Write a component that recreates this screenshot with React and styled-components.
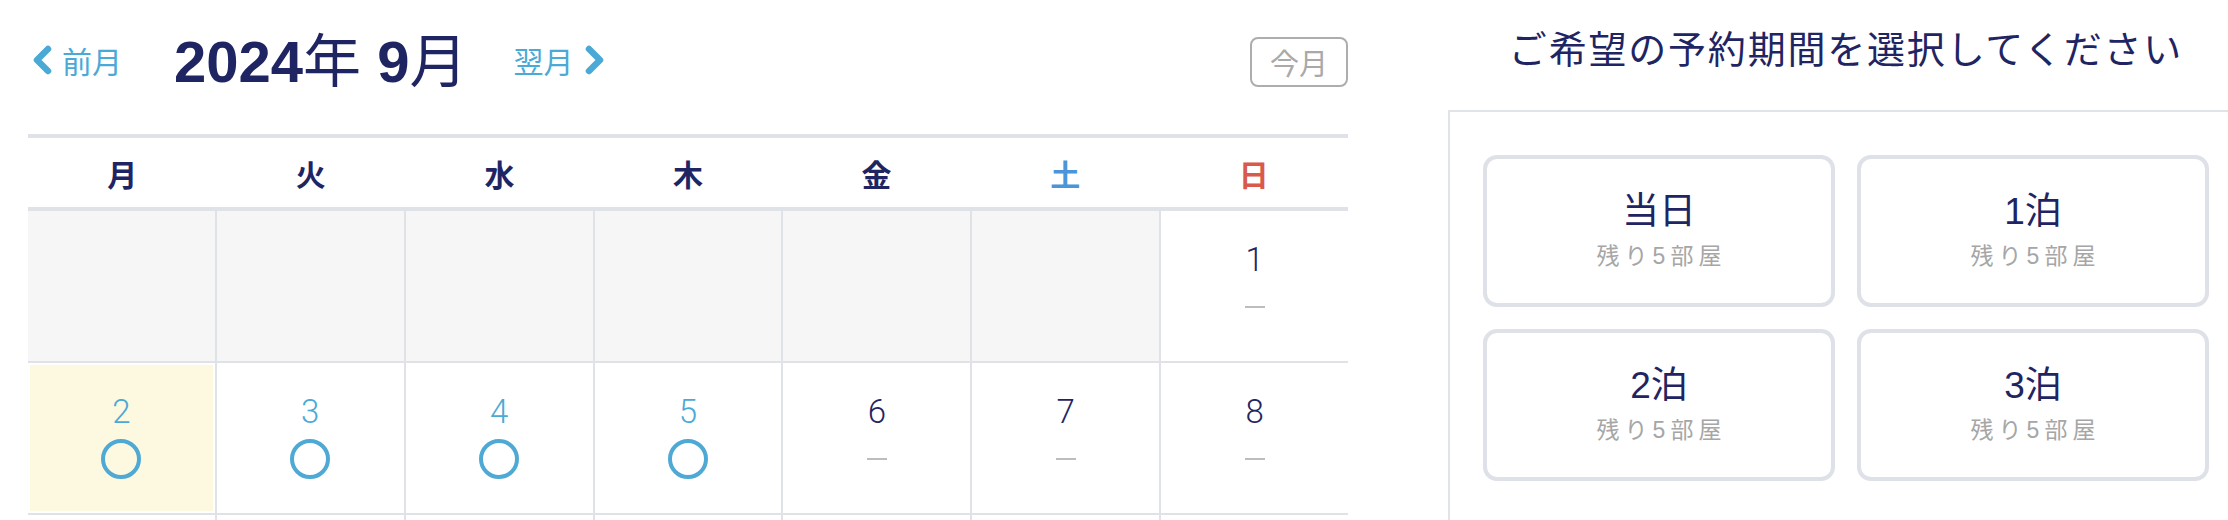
import React from "react";
import styled, { createGlobalStyle } from "styled-components";

const NAVY = "#1f2563";
const BLUE = "#4ba9d6";
const LINE = "#dfe2e7";

const GlobalStyle = createGlobalStyle`
  html, body {
    margin: 0;
    padding: 0;
    background: #fff;
    overflow: hidden;
  }
  body {
    font-family: "Liberation Sans", "Noto Sans CJK JP", sans-serif;
    color: ${NAVY};
  }
`;

const WEEKDAYS = [
  { label: "月", color: NAVY },
  { label: "火", color: NAVY },
  { label: "水", color: NAVY },
  { label: "木", color: NAVY },
  { label: "金", color: NAVY },
  { label: "土", color: "#4a96d9" },
  { label: "日", color: "#d9594b" },
];

const PLANS = ["当日", "1泊", "2泊", "3泊"];

// September 2024, weeks start on Monday (the 1st is a Sunday)
const buildDays = () => {
  const cells = [];
  for (let i = 0; i < 6; i++) cells.push({ blank: true });
  for (let d = 1; d <= 30; d++) {
    cells.push({
      day: d,
      open: d >= 2 && d <= 5,
      today: d === 2,
    });
  }
  while (cells.length % 7) cells.push({ blank: true });
  return cells;
};

const Chevron = ({ dir }) => (
  <svg width="21" height="30" viewBox="0 0 21 30">
    <polyline
      points={dir === "left" ? "16,4 5,15 16,26" : "5,4 16,15 5,26"}
      fill="none"
      stroke={BLUE}
      strokeWidth="6.5"
      strokeLinecap="round"
      strokeLinejoin="round"
    />
  </svg>
);

const App = () => {
  const days = buildDays();
  return (
    <>
      <GlobalStyle />
      <Page>
        <Calendar>
          <Header>
            <NavLink>
              <Chevron dir="left" />
              前月
            </NavLink>
            <MonthTitle>
              <Num>2024</Num>年 <Num>9</Num>月
            </MonthTitle>
            <NavLink $gap={11}>
              翌月
              <Chevron dir="right" />
            </NavLink>
            <TodayButton type="button">今月</TodayButton>
          </Header>

          <WeekHead>
            {WEEKDAYS.map((w) => (
              <WeekDay key={w.label} $color={w.color}>
                {w.label}
              </WeekDay>
            ))}
          </WeekHead>

          <DaysGrid>
            {days.map((c, i) =>
              c.blank ? (
                <DayCell key={i} $variant="blank" />
              ) : (
                <DayCell key={i} $variant={c.today ? "today" : "normal"}>
                  <DayNum $open={c.open}>{c.day}</DayNum>
                  <Mark>{c.open ? <Circle /> : <Dash />}</Mark>
                </DayCell>
              )
            )}
          </DaysGrid>
        </Calendar>

        <Side>
          <SideTitle>ご希望の予約期間を選択してください</SideTitle>
          <Panel>
            {PLANS.map((p) => (
              <PlanCard key={p} type="button">
                <PlanLabel>{p}</PlanLabel>
                <PlanSub>残り5部屋</PlanSub>
              </PlanCard>
            ))}
          </Panel>
        </Side>
      </Page>
    </>
  );
};

const Page = styled.div`
  display: flex;
  align-items: flex-start;
  width: 2228px;
  padding-left: 28px;
  box-sizing: border-box;
`;

const Calendar = styled.section`
  width: 1320px;
  flex: none;
`;

const Header = styled.div`
  display: flex;
  align-items: center;
  height: 120px;
  padding-left: 4px;
  margin-bottom: 14px;
`;

const NavLink = styled.a`
  display: flex;
  align-items: center;
  gap: ${(p) => p.$gap || 9}px;
  color: ${BLUE};
  font-family: "Noto Sans CJK JP", sans-serif;
  font-size: 30px;
  line-height: 1;
  cursor: pointer;
`;

const MonthTitle = styled.h1`
  margin: 4px 46px 0 52px;
  font-size: 58px;
  font-weight: 400;
  line-height: 1;
  color: ${NAVY};
  white-space: pre;
`;

const Num = styled.span`
  font-family: "Liberation Sans", sans-serif;
  font-weight: 700;
`;

const TodayButton = styled.button`
  margin-left: auto;
  height: 50px;
  padding: 0 18px;
  margin-top: 4px;
  border: 2px solid #adadad;
  border-radius: 8px;
  background: #fff;
  color: #a9a9a9;
  font-family: "Noto Sans CJK JP", sans-serif;
  font-size: 29px;
  line-height: 1;
`;

const WeekHead = styled.div`
  display: grid;
  grid-template-columns: repeat(7, 1fr);
  height: 69px;
  border-top: 4px solid ${LINE};
  border-bottom: 4px solid ${LINE};
`;

const WeekDay = styled.div`
  display: flex;
  align-items: center;
  justify-content: center;
  font-family: "Noto Sans CJK JP", sans-serif;
  font-size: 30px;
  font-weight: 700;
  color: ${(p) => p.$color};
`;

const DaysGrid = styled.div`
  display: grid;
  grid-template-columns: repeat(7, 1fr);
  grid-auto-rows: 150px;
  gap: 2px;
  background: ${LINE};
`;

const DayCell = styled.div`
  display: flex;
  flex-direction: column;
  align-items: center;
  padding-top: 27px;
  box-sizing: border-box;
  background: ${(p) =>
    p.$variant === "blank" ? "#f6f6f7" : p.$variant === "today" ? "#fdf8e0" : "#fff"};
  box-shadow: ${(p) => (p.$variant === "today" ? "inset 0 0 0 2px #fff" : "none")};
`;

const DayNum = styled.div`
  font-family: Roboto, "Liberation Sans", sans-serif;
  font-weight: 300;
  font-size: 33px;
  line-height: 44px;
  color: ${(p) => (p.$open ? BLUE : NAVY)};
`;

const Mark = styled.div`
  height: 40px;
  margin-top: 5px;
  display: flex;
  align-items: center;
  justify-content: center;
`;

const Circle = styled.span`
  width: 40px;
  height: 40px;
  box-sizing: border-box;
  border: 4px solid #4fa9d5;
  border-radius: 50%;
`;

const Dash = styled.span`
  width: 20px;
  height: 2px;
  background: #bdbdbd;
`;

const Side = styled.aside`
  width: 796px;
  flex: none;
  margin-left: 100px;
`;

const SideTitle = styled.h2`
  margin: 0;
  height: 110px;
  line-height: 94px;
  text-align: center;
  font-family: "Noto Sans CJK JP", sans-serif;
  font-size: 38px;
  font-weight: 400;
  letter-spacing: 1.8px;
  color: ${NAVY};
`;

const Panel = styled.div`
  display: grid;
  grid-template-columns: 1fr 1fr;
  gap: 22px;
  padding: 43px 35px 40px 33px;
  border-top: 2px solid #e0e3e8;
  border-left: 2px solid #e0e3e8;
`;

const PlanCard = styled.button`
  height: 152px;
  box-sizing: border-box;
  border: 4px solid #dee1e7;
  border-radius: 14px;
  background: #fff;
  display: flex;
  flex-direction: column;
  align-items: center;
  justify-content: center;
  font-family: "Liberation Sans", "Noto Sans CJK JP", sans-serif;
  cursor: pointer;
`;

const PlanLabel = styled.div`
  font-size: 37px;
  line-height: 50px;
  color: ${NAVY};
`;

const PlanSub = styled.div`
  font-size: 23px;
  line-height: 38px;
  letter-spacing: 5px;
  padding-left: 5px;
  color: #a6a6a6;
`;

export default App;
